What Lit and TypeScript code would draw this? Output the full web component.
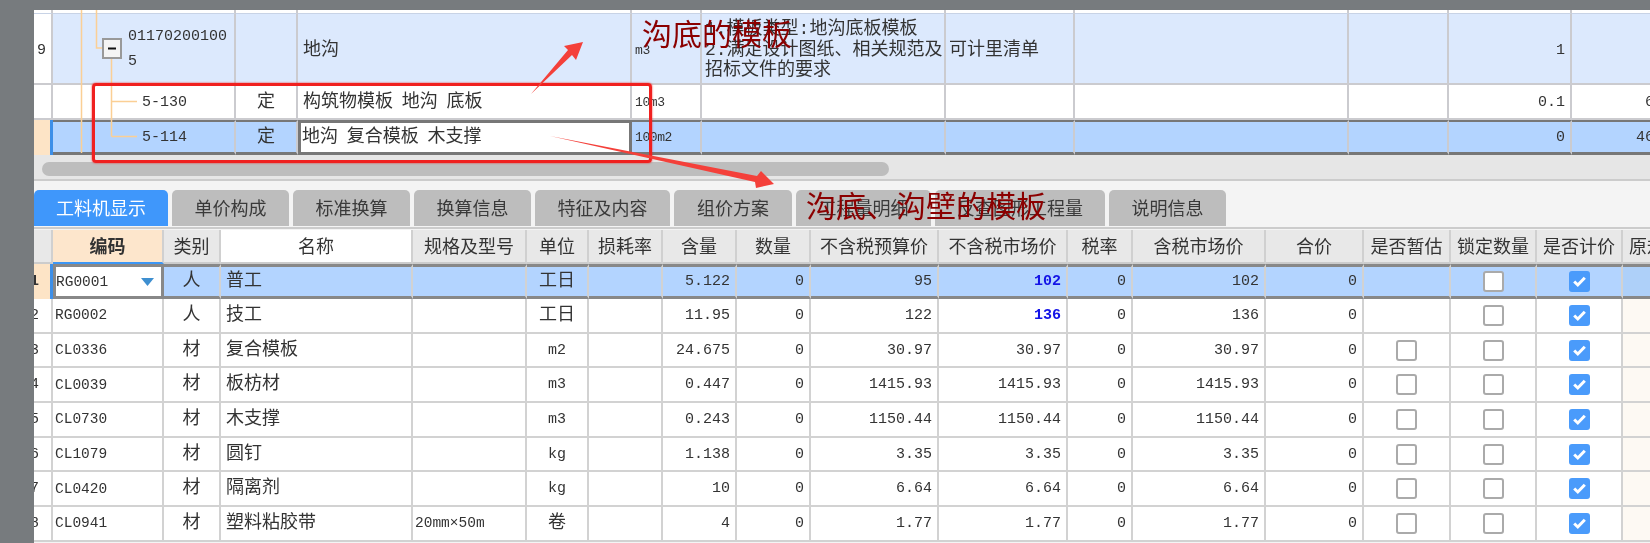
import { LitElement, html, css, svg } from "lit";
import { customElement } from "lit/decorators.js";

const tabs: [string, number][] = [
  ["工料机显示", 134], ["单价构成", 117], ["标准换算", 117], ["换算信息", 117], ["特征及内容", 135],
  ["组价方案", 118], ["工程量明细", 135], ["反查图形工程量", 170], ["说明信息", 117],
];
const heads = ["", "编码", "类别", "名称", "规格及型号", "单位", "损耗率", "含量", "数量", "不含税预算价", "不含税市场价", "税率", "含税市场价", "合价", "是否暂估", "锁定数量", "是否计价", "原规"];
type Row = { n: string; code: string; t: string; name: string; spec?: string; unit: string; q: string; p: string; m: string; blue?: boolean };
const rows: Row[] = [
  { n: "1", code: "RG0001", t: "人", name: "普工", unit: "工日", q: "5.122", p: "95", m: "102", blue: true },
  { n: "2", code: "RG0002", t: "人", name: "技工", unit: "工日", q: "11.95", p: "122", m: "136", blue: true },
  { n: "3", code: "CL0336", t: "材", name: "复合模板", unit: "m2", q: "24.675", p: "30.97", m: "30.97" },
  { n: "4", code: "CL0039", t: "材", name: "板枋材", unit: "m3", q: "0.447", p: "1415.93", m: "1415.93" },
  { n: "5", code: "CL0730", t: "材", name: "木支撑", unit: "m3", q: "0.243", p: "1150.44", m: "1150.44" },
  { n: "6", code: "CL1079", t: "材", name: "圆钉", unit: "kg", q: "1.138", p: "3.35", m: "3.35" },
  { n: "7", code: "CL0420", t: "材", name: "隔离剂", unit: "kg", q: "10", p: "6.64", m: "6.64" },
  { n: "8", code: "CL0941", t: "材", name: "塑料粘胶带", spec: "20mm×50m", unit: "卷", q: "4", p: "1.77", m: "1.77" },
];

@customElement("app-root")
export class AppRoot extends LitElement {
  static styles = css`
    :host { display: block; }
    * { box-sizing: border-box; }
    .app {
      position: relative; width: 1650px; height: 543px; overflow: hidden; background: #777b7e;
      padding: 10px 0 0 34px; color: #333; filter: blur(0.45px);
      font-family: "Liberation Mono", "Noto Sans CJK SC", monospace; font-size: 15px;
    }
    .panel { width: 1710px; height: 533px; background: #f4f4f4; overflow: hidden; }
    .upper-body { position: relative; }
    .u { display: grid; grid-template-columns: 19px 183px 62px 334px 70px 244px 129px 274px 100px 123px 134px; }
    .l { display: grid; grid-template-columns: 19px 111px 57px 192px 114px 62px 74px 74px 74px 128px 129px 65px 133px 98px 87px 86px 86px 60px; }
    .c {
      display: flex; align-items: center; border-right: 2px solid #cbcbcf; border-bottom: 2px solid #cbcbcf;
      padding: 0 5px; overflow: hidden; white-space: nowrap; min-width: 0;
    }
    .cap .c { height: 4px; background: #fff; border-bottom: 1px solid #c8d3e6; }
    .r9 .c { height: 71px; background: #dce9fd; padding-top: 3px; }
    .r130 .c { height: 35px; background: #fff; padding-top: 2px; }
    .r114 .c { height: 35px; background: #b3d4ff; border-top: 2px solid #777; border-bottom: 3px solid #777; }
    .r9 .c:first-child, .r130 .c:first-child { background: #fff; }
    .r9 .c:first-child { padding: 3px 3px 0; }
    .r114 .c:first-child { background: #fde4c6; border-top: 0; border-bottom: 0; border-right: 3px solid #3d8fe8; padding: 0; }
    .r114 .edit { background: #fff; border: 3px solid #777; padding: 0 1px; }
    .zh { font-size: 18px; line-height: 23px; word-spacing: -2px; }
    .r9 .c.wrap { white-space: nowrap; font-size: 18px; line-height: 20.5px; padding: 3px 0 0 3px; }
    .r9 .c.code { line-height: 25px; white-space: normal; padding: 1px 0 0 75px; }
    .r9 .c.clear { padding-left: 3px; }
    .ind { padding-left: 89px; }
    .ctr { justify-content: center; }
    .num { justify-content: flex-end; }
    .r9 .c.unit, .r130 .c.unit, .r114 .c.unit { font-size: 13px; padding-left: 3px; padding-right: 0; letter-spacing: -0.4px; }
    .scroll { padding: 7px 0 0 8px; background: #e6e6e6; border-bottom: 2px solid #ccc; height: 26px; }
    .thumb { width: 847px; height: 14px; border-radius: 7px; background: #bdbdbd; }
    .tabs { display: flex; gap: 4px; height: 48px; padding-top: 9px; border-bottom: 2px solid #ccc; }
    .tab {
      height: 36px; background: #bdbdbd; border-radius: 5px 5px 0 0; display: flex; align-items: center;
      justify-content: center; font-size: 18px; color: #3a3a3a; padding-bottom: 2px;
    }
    .tab.on { background: #3f97fb; color: #fff; }
    .gap { height: 1px; background: #f4f4f4; }
    .h .c { height: 34px; background: #e8e8e8; justify-content: center; font-size: 18px; padding: 0 0 3px; border-bottom: 2px solid #ccc; border-right-color: #d0d0d0; }
    .h .c.plain { background: #fff; }
    .h .c.key { background: #fde6cc; font-weight: 700; border-bottom: 2px solid #3d97f5; }
    .h .c.last { justify-content: flex-start; padding-left: 6px; }
    .b .c { height: 34.7px; background: #fff; border-color: #d2d2d2; }
    .b .c.orig { background: #fdf9f3; }
    .b .c.rn { padding: 0; font-size: 15px; }
    .rn span { margin-left: -4px; }
    .b .c.txt { padding: 0 2px; font-size: 14.5px; }
    .b.sel .c { background: #b3d4ff; border-top: 3px solid #888; border-bottom: 3px solid #888; height: 35px; }
    .b.sel .c.rn { background: #fde4c6; border-top: 0; border-bottom: 0; border-right: 3px solid #3d8fe8; font-weight: 700; }
    .b.sel .c.orig { background: #aed0f9; }
    .b.sel .c.editc { background: #fff; border: 3px solid #888; justify-content: space-between; padding: 0 3px 0 0; font-size: 14.5px; }
    .tri { width: 13px; height: 8px; margin-right: 4px; }
    .blue { color: #1414e6; font-weight: 700; }
    .box { width: 21px; height: 21px; border: 2px solid #aaa; border-radius: 3px; background: #fff; display: block; }
    .box.on { background: #4a9bfb; border-color: #4a9bfb; }
    .box svg { display: block; width: 17px; height: 17px; }
    .tree { position: absolute; left: 0; top: 0; width: 200px; height: 146px; pointer-events: none; }
    .over { position: absolute; inset: 0; width: 1650px; height: 543px; pointer-events: none; }
    .note { position: absolute; color: #8b0000; font-size: 30px; line-height: 34px; white-space: nowrap; font-family: "Noto Sans CJK SC", sans-serif; }
    .n1 { left: 642px; top: 15px; }
    .n2 { left: 806px; top: 187px; }
    .frame { position: absolute; left: 92px; top: 83px; width: 560px; height: 80px; border: 3px solid #f0201f; border-radius: 4px; box-shadow: 0 0 2px #f0201f; }
  `;

  private box(on: boolean) {
    return html`<span class="box ${on ? "on" : ""}">${on
      ? html`<svg viewBox="0 0 17 17"><path d="M3.2 8.5 L6.8 12 L13.8 4.8" fill="none" stroke="#fff" stroke-width="3"/></svg>`
      : ""}</span>`;
  }

  private tree() {
    const o = "#fbcf95";
    return html`<svg class="tree" viewBox="0 0 200 146">
      ${svg`
        <path d="M47.5 0V143M62.5 0V38H68M77.5 48V126.5M77.5 91.5H103M77.5 126.5H103" fill="none" stroke="${o}" stroke-width="1.5"/>
        <rect x="69" y="29" width="18" height="19" fill="#f4f4f4" stroke="#999" stroke-width="2"/>
        <path d="M74 38.5H82" stroke="#111" stroke-width="2"/>
      `}
    </svg>`;
  }

  render() {
    return html`<div class="app">
      <div class="panel">
        <div class="upper-body">
          <div class="u cap">${Array.from({ length: 11 }, () => html`<div class="c"></div>`)}</div>
          <div class="u r9">
            <div class="c">9</div>
            <div class="c code"><span>01170200100<br />5</span></div>
            <div class="c"></div>
            <div class="c zh">地沟</div>
            <div class="c unit">m3</div>
            <div class="c wrap"><span>1.模板类型:地沟底板模板<br />2.满足设计图纸、相关规范及<br />招标文件的要求</span></div>
            <div class="c zh clear">可计里清单</div>
            <div class="c"></div><div class="c"></div>
            <div class="c num">1</div>
            <div class="c"></div>
          </div>
          <div class="u r130">
            <div class="c"></div>
            <div class="c ind">5-130</div>
            <div class="c zh ctr">定</div>
            <div class="c zh">构筑物模板 地沟 底板</div>
            <div class="c unit">10m3</div>
            <div class="c"></div><div class="c"></div><div class="c"></div><div class="c"></div>
            <div class="c num">0.1</div>
            <div class="c num">611.17</div>
          </div>
          <div class="u r114">
            <div class="c"></div>
            <div class="c ind">5-114</div>
            <div class="c zh ctr">定</div>
            <div class="c zh edit">地沟 复合模板 木支撑</div>
            <div class="c unit">100m2</div>
            <div class="c"></div><div class="c"></div><div class="c"></div><div class="c"></div>
            <div class="c num">0</div>
            <div class="c num">4611.17</div>
          </div>
          ${this.tree()}
        </div>
        <div class="scroll"><div class="thumb"></div></div>
        <div class="tabs">
          ${tabs.map(([t, w], i) => html`<div class="tab ${i === 0 ? "on" : ""}" style="width:${w}px">${t}</div>`)}
        </div>
        <div class="gap"></div>
        <div class="l h">
          ${heads.map((h, i) => html`<div class="c ${i === 1 ? "key" : ""} ${i === 3 ? "plain" : ""} ${i === 17 ? "last" : ""}">${h}</div>`)}
        </div>
        ${rows.map((r, i) => html`<div class="l b ${i === 0 ? "sel" : ""}">
          <div class="c rn"><span>${r.n}</span></div>
          ${i === 0
            ? html`<div class="c editc"><span>${r.code}</span><svg class="tri" viewBox="0 0 13 8"><polygon points="0,0 13,0 6.5,8" fill="#3e8fd0"/></svg></div>`
            : html`<div class="c txt">${r.code}</div>`}
          <div class="c zh ctr">${r.t}</div>
          <div class="c zh">${r.name}</div>
          <div class="c txt">${r.spec ?? ""}</div>
          <div class="c ctr ${/[a-z]/.test(r.unit) ? "" : "zh"}">${r.unit}</div>
          <div class="c"></div>
          <div class="c num">${r.q}</div>
          <div class="c num">0</div>
          <div class="c num">${r.p}</div>
          <div class="c num ${r.blue ? "blue" : ""}">${r.m}</div>
          <div class="c num">0</div>
          <div class="c num">${r.m}</div>
          <div class="c num">0</div>
          <div class="c ctr">${i > 1 ? this.box(false) : ""}</div>
          <div class="c ctr">${this.box(false)}</div>
          <div class="c ctr">${this.box(true)}</div>
          <div class="c orig"></div>
        </div>`)}
      </div>
      <div class="frame"></div>
      <svg class="over" viewBox="0 0 1650 543">
        ${svg`
          <polygon points="531,94 568,50 564,46 583,42 576,60 572,55" fill="#f4403a"/>
          <polygon points="550,136 757,176 761,171 774,184 756,188 755,182" fill="#f4403a"/>
        `}
      </svg>
      <div class="note n1">沟底的模板</div>
      <div class="note n2">沟底、沟壁的模板</div>
    </div>`;
  }
}
